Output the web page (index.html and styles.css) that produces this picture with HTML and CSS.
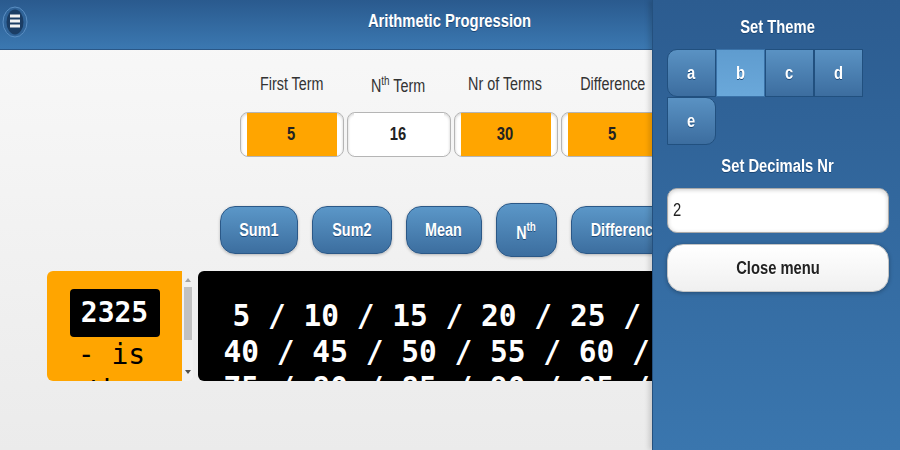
FILE: index.html
```html
<!DOCTYPE html>
<html lang="en">
<head>
<meta charset="utf-8">
<title>Arithmetic Progression</title>
<link rel="stylesheet" href="styles.css">
</head>
<body>
<div class="app">
  <header class="bar">
    <a class="menu-btn" href="#panel" aria-label="Menu">
      <svg width="26" height="32" viewBox="0 0 26 32">
        <ellipse cx="13" cy="16" rx="12" ry="15" fill="#2f6398" stroke="#5b8fc3" stroke-width="1"/>
        <ellipse cx="13" cy="16" rx="8.5" ry="12.5" fill="#1b3d64"/>
        <rect x="8" y="8.5" width="10" height="3" fill="#f2f2f2"/>
        <rect x="8" y="13.5" width="10" height="3" fill="#f2f2f2"/>
        <rect x="8" y="18.5" width="10" height="3" fill="#f2f2f2"/>
      </svg>
    </a>
    <h1 class="title"><span class="cn">Arithmetic Progression</span></h1>
    <span class="bar-spacer"></span>
  </header>

  <main class="content">
    <div class="fields">
      <div class="fld-label"><span class="cn">First Term</span></div>
      <div class="fld-label fld-label-sup"><span class="cn">N<sup>th</sup> Term</span></div>
      <div class="fld-label"><span class="cn">Nr of Terms</span></div>
      <div class="fld-label"><span class="cn">Difference</span></div>
      <div class="fld"><span class="fld-input orange"><span class="cn">5</span></span></div>
      <div class="fld"><span class="fld-input"><span class="cn">16</span></span></div>
      <div class="fld"><span class="fld-input orange"><span class="cn">30</span></span></div>
      <div class="fld"><span class="fld-input orange"><span class="cn">5</span></span></div>
    </div>

    <div class="actions">
      <button class="btn btn-sum1"><span class="cn">Sum1</span></button>
      <button class="btn btn-sum2"><span class="cn">Sum2</span></button>
      <button class="btn btn-mean"><span class="cn">Mean</span></button>
      <button class="btn btn-nth"><span class="cn">N<sup>th</sup></span></button>
      <button class="btn btn-diff"><span class="cn">Difference</span></button>
    </div>

    <div class="output">
      <div class="result">
        <div class="result-text">
          <div class="big">2325</div>
          <p class="result-line">- is the sum</p>
        </div>
        <div class="scrollbar">
          <span class="arrow up"></span>
          <span class="track"><span class="thumb"></span></span>
          <span class="arrow down"></span>
        </div>
      </div>
      <div class="series">5 / 10 / 15 / 20 / 25 / 30 / 35 / 40 / 45 / 50 / 55 / 60 / 65 / 70 / 75 / 80 / 85 / 90 / 95 / 100 / 105 / 110 / 115 / 120 / 125 / 130 / 135 / 140 / 145 / 150</div>
    </div>
  </main>

  <aside class="panel" id="panel">
    <h3 class="panel-title"><span class="cn">Set Theme</span></h3>
    <div class="themes">
      <button class="theme first"><span class="cn">a</span></button>
      <button class="theme active"><span class="cn">b</span></button>
      <button class="theme"><span class="cn">c</span></button>
      <button class="theme"><span class="cn">d</span></button>
      <button class="theme last"><span class="cn">e</span></button>
    </div>
    <h3 class="panel-title"><span class="cn">Set Decimals Nr</span></h3>
    <div class="dec-input"><span class="cn cn-left">2</span></div>
    <button class="close-btn"><span class="cn">Close menu</span></button>
  </aside>
</div>
</body>
</html>
```

FILE: styles.css
```css
* { box-sizing: border-box; }

html, body {
  margin: 0;
  padding: 0;
  width: 900px;
  height: 450px;
  overflow: hidden;
}

body {
  font-family: "Liberation Sans", Arial, sans-serif;
  color: #333;
  background: linear-gradient(#f9f9f9, #ebebeb);
}

/* narrow (condensed) rendering of the sans text */
.cn {
  display: inline-block;
  transform: scaleX(0.82);
  transform-origin: center;
  white-space: nowrap;
}
.cn-left { transform-origin: left center; }

.app {
  width: 900px;
  height: 450px;
}

/* Header */
.bar {
  height: 50px;
  display: grid;
  grid-template-columns: 40px 1fr 40px;
  align-items: start;
  background: linear-gradient(#2a5a8e, #3b78b1);
  border-bottom: 1px solid #2a5787;
}

.menu-btn {
  display: block;
  width: 26px;
  height: 32px;
  margin: 6px 0 0 2px;
}
.menu-btn svg { display: block; }

.title {
  margin: 0;
  padding-top: 10px;
  text-align: center;
  font-size: 18px;
  line-height: 22px;
  font-weight: bold;
  color: #fff;
  text-shadow: 0 1px 0 #1b4675;
}

/* Content */
.content {
  padding-top: 23px;
}

.fields {
  width: 421px;
  margin: 0 auto;
  display: grid;
  grid-template-columns: repeat(4, 104px);
  grid-template-rows: 39px 45px;
  column-gap: 3px;
}

.fld-label {
  text-align: center;
  font-size: 17.5px;
  line-height: 22px;
  color: #333;
}
.fld-label-sup { padding-top: 2px; }
.fld-label sup, .btn sup {
  font-size: 12px;
  line-height: 0;
  vertical-align: 8px;
}
.fld-label sup { vertical-align: 7px; }

.fld {
  display: flex;
  padding: 0 6px;
  background: #fff;
  border: 1px solid #b5b5b5;
  border-radius: 8px;
  box-shadow: inset 0 1px 3px rgba(0,0,0,.2);
}
.fld-input {
  flex: 1;
  display: flex;
  align-items: center;
  justify-content: center;
  font-size: 18px;
  font-weight: bold;
  color: #222;
  background: #fff;
}
.fld-input.orange { background: #ffa500; }

.actions {
  margin-top: 46px;
  height: 54px;
  display: flex;
  justify-content: center;
  align-items: center;
  gap: 14px;
}

.btn {
  font-family: inherit;
  font-size: 17.5px;
  font-weight: bold;
  line-height: 20px;
  padding: 13px 0;
  color: #fff;
  text-shadow: 0 1px 0 #1d4a78;
  background: linear-gradient(#5b97c8, #3c6e9f);
  border: 1px solid #2b5887;
  border-radius: 15px;
  box-shadow: 0 1px 3px rgba(0,0,0,.25);
  white-space: nowrap;
  text-align: center;
}
.btn-sum1 { width: 78px; }
.btn-sum2 { width: 80px; }
.btn-mean { width: 76px; }
.btn-nth  { width: 61px; padding: 19px 0 13px; }
.btn-diff { width: 110px; }

/* Output */
.output {
  margin: 14px 47px 0;
  height: 110px;
  display: flex;
  gap: 5px;
}

.result {
  width: 146px;
  display: flex;
  border-radius: 6px;
  overflow: hidden;
  background: #f4f4f4;
}
.result-text {
  width: 135px;
  background: #ffa500;
  overflow: hidden;
  padding-top: 18px;
  font-family: "DejaVu Sans Mono", monospace;
  font-weight: bold;
  font-size: 28px;
  line-height: 36px;
  text-align: center;
  color: #000;
}
.big {
  width: 90px;
  height: 48px;
  margin: 0 auto;
  background: #000;
  color: #fff;
  border-radius: 4px;
  line-height: 48px;
}
.result-line {
  margin: 0;
  padding: 0 14px 0 8px;
  font-weight: normal;
}

.scrollbar {
  width: 11px;
  display: flex;
  flex-direction: column;
  align-items: center;
  background: #f1f1f1;
}
.arrow {
  width: 0;
  height: 0;
  border-left: 3px solid transparent;
  border-right: 3px solid transparent;
}
.arrow.up {
  margin-top: 7px;
  border-bottom: 4px solid #a3a3a3;
}
.arrow.down {
  margin-bottom: 7px;
  border-top: 4px solid #505050;
}
.track {
  flex: 1;
  width: 8px;
  padding-top: 5px;
}
.thumb {
  display: block;
  width: 8px;
  height: 53px;
  background: #c1c1c1;
}

.series {
  flex: 1;
  background: #000;
  border-radius: 6px;
  overflow: hidden;
  padding: 27px 18px 0;
  font-family: "DejaVu Sans Mono", monospace;
  font-weight: bold;
  font-size: 29.5px;
  line-height: 36px;
  text-align: center;
  color: #fff;
}

/* Panel */
.panel {
  position: fixed;
  top: 0;
  right: 0;
  width: 248px;
  height: 450px;
  padding: 16px 11px 0 14px;
  background: linear-gradient(#2c5c90, #3a76ae);
  border-left: 1px solid #24507e;
  box-shadow: -3px 0 5px rgba(0,0,0,.15);
}

.panel-title {
  margin: 0;
  text-align: center;
  font-size: 18px;
  line-height: 22px;
  font-weight: bold;
  color: #fff;
  text-shadow: 0 1px 0 #1b4675;
}

.themes {
  width: 196px;
  margin: 11px 0 10px;
  display: flex;
  flex-wrap: wrap;
}
.theme {
  width: 49px;
  height: 48px;
  padding: 0;
  font-family: inherit;
  font-size: 18px;
  font-weight: bold;
  color: #fff;
  text-shadow: 0 1px 0 #1d4a78;
  background: linear-gradient(#5a92c3, #3c6d9f);
  border: 1px solid #21507f;
  border-radius: 0;
}
.theme.first { border-radius: 10px 0 0 10px; }
.theme.last { border-radius: 0 10px 10px 0; }
.theme.active {
  background: linear-gradient(#5f9ccf, #6aa8da);
  border-color: #3a72a8;
}

.dec-input {
  margin-top: 11px;
  height: 45px;
  padding: 0 5px;
  display: flex;
  align-items: center;
  font-size: 18px;
  color: #222;
  background: #fff;
  border: 1px solid #a9a9a9;
  border-radius: 10px;
  box-shadow: inset 0 1px 4px rgba(0,0,0,.2);
}

.close-btn {
  display: block;
  width: 100%;
  height: 48px;
  margin-top: 11px;
  font-family: inherit;
  font-size: 18px;
  font-weight: bold;
  color: #222;
  text-shadow: 0 1px 0 #fff;
  background: linear-gradient(#ffffff, #f0f0f0);
  border: 1px solid #c4c4c4;
  border-radius: 16px;
  box-shadow: 0 1px 4px rgba(0,0,0,.3);
}
```
